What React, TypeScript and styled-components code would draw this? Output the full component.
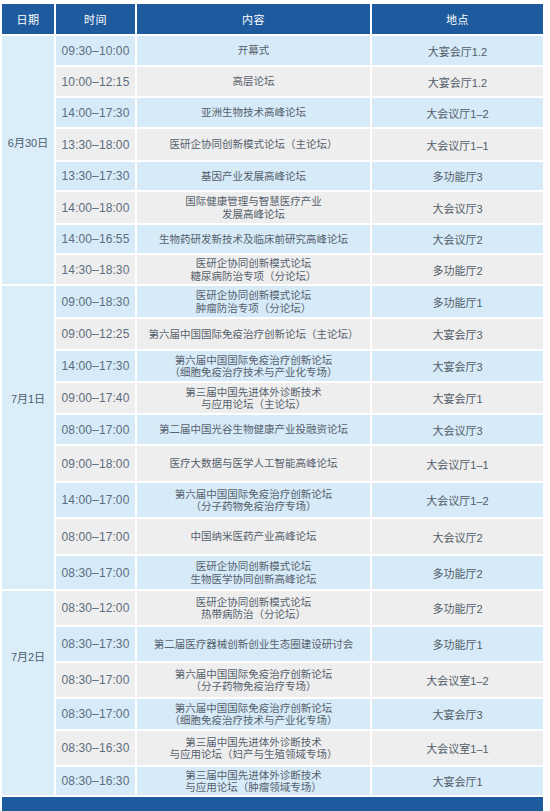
import React from "react";
import styled, { createGlobalStyle } from "styled-components";

const GlobalStyle = createGlobalStyle`
  html, body {
    margin: 0;
    padding: 0;
    background: #ffffff;
    overflow: hidden;
  }
  body {
    font-family: "Liberation Sans", "Noto Sans CJK SC", sans-serif;
  }
`;

const BLUE = "#1d5b9e";
const ROW_BLUE = "#d6eaf8";
const ROW_GRAY = "#eeeeee";
const DATE_BG = "#daedf9";

type Row = { time: string; content: string[]; place: string; h: number };
type Group = { date: string; labelTop: number; rows: Row[] };

const groups: Group[] = [
  {
    date: "6月30日",
    labelTop: 100,
    rows: [
      { time: "09:30–10:00", content: ["开幕式"], place: "大宴会厅1.2", h: 29 },
      { time: "10:00–12:15", content: ["高层论坛"], place: "大宴会厅1.2", h: 29 },
      { time: "14:00–17:30", content: ["亚洲生物技术高峰论坛"], place: "大会议厅1–2", h: 29 },
      { time: "13:30–18:00", content: ["医研企协同创新模式论坛（主论坛）"], place: "大会议厅1–1", h: 31 },
      { time: "13:30–17:30", content: ["基因产业发展高峰论坛"], place: "多功能厅3", h: 28 },
      { time: "14:00–18:00", content: ["国际健康管理与智慧医疗产业", "发展高峰论坛"], place: "大会议厅3", h: 31 },
      { time: "14:00–16:55", content: ["生物药研发新技术及临床前研究高峰论坛"], place: "大会议厅2", h: 28 },
      { time: "14:30–18:30", content: ["医研企协同创新模式论坛", "糖尿病防治专项（分论坛）"], place: "多功能厅2", h: 29 },
    ],
  },
  {
    date: "7月1日",
    labelTop: 106,
    rows: [
      { time: "09:00–18:30", content: ["医研企协同创新模式论坛", "肿瘤防治专项（分论坛）"], place: "多功能厅1", h: 31 },
      { time: "09:00–12:25", content: ["第六届中国国际免疫治疗创新论坛（主论坛）"], place: "大宴会厅3", h: 30 },
      { time: "14:00–17:30", content: ["第六届中国国际免疫治疗创新论坛", "（细胞免疫治疗技术与产业化专场）"], place: "大宴会厅3", h: 30 },
      { time: "09:00–17:40", content: ["第三届中国先进体外诊断技术", "与应用论坛（主论坛）"], place: "大宴会厅1", h: 30 },
      { time: "08:00–17:00", content: ["第二届中国光谷生物健康产业投融资论坛"], place: "大会议厅3", h: 29 },
      { time: "09:00–18:00", content: ["医疗大数据与医学人工智能高峰论坛"], place: "大会议厅1–1", h: 35 },
      { time: "14:00–17:00", content: ["第六届中国国际免疫治疗创新论坛", "（分子药物免疫治疗专场）"], place: "大会议厅1–2", h: 34 },
      { time: "08:00–17:00", content: ["中国纳米医药产业高峰论坛"], place: "大会议厅2", h: 35 },
      { time: "08:30–17:00", content: ["医研企协同创新模式论坛", "生物医学协同创新高峰论坛"], place: "多功能厅2", h: 33 },
    ],
  },
  {
    date: "7月2日",
    labelTop: 59,
    rows: [
      { time: "08:30–12:00", content: ["医研企协同创新模式论坛", "热带病防治（分论坛）"], place: "多功能厅2", h: 34 },
      { time: "08:30–17:30", content: ["第二届医疗器械创新创业生态圈建设研讨会"], place: "多功能厅1", h: 34 },
      { time: "08:30–17:00", content: ["第六届中国国际免疫治疗创新论坛", "（分子药物免疫治疗专场）"], place: "大会议室1–2", h: 34 },
      { time: "08:30–17:00", content: ["第六届中国国际免疫治疗创新论坛", "（细胞免疫治疗技术与产业化专场）"], place: "大宴会厅3", h: 30 },
      { time: "08:30–16:30", content: ["第三届中国先进体外诊断技术", "与应用论坛（妇产与生殖领域专场）"], place: "大会议室1–1", h: 34 },
      { time: "08:30–16:30", content: ["第三届中国先进体外诊断技术", "与应用论坛（肿瘤领域专场）"], place: "大宴会厅1", h: 28 },
    ],
  },
];

const Page = styled.div`
  padding: 4px 0 0 2px;
  width: 541px;
`;

const Table = styled.div<{ $rows: string }>`
  display: grid;
  grid-template-columns: 52px 79px 233px 171px;
  grid-template-rows: ${(p) => p.$rows};
  gap: 2px;
`;

const HeadCell = styled.div`
  background: ${BLUE};
  color: #ffffff;
  font-size: 11px;
  display: flex;
  align-items: center;
  justify-content: center;
  letter-spacing: 0.5px;
`;

const DateCell = styled.div<{ $span: number; $top: number }>`
  grid-column: 1;
  grid-row: span ${(p) => p.$span};
  background: ${DATE_BG};
  color: #4e5d6c;
  font-size: 11px;
  line-height: 14px;
  display: flex;
  justify-content: center;
  align-items: flex-start;
  padding-top: ${(p) => p.$top}px;
`;

const Cell = styled.div<{ $alt: boolean }>`
  background: ${(p) => (p.$alt ? ROW_GRAY : ROW_BLUE)};
  display: flex;
  flex-direction: column;
  align-items: center;
  justify-content: center;
  text-align: center;
`;

const TimeCell = styled(Cell)`
  color: #5c6d7d;
  font-size: 12px;
  letter-spacing: 0.1px;
`;

const ContentCell = styled(Cell)`
  color: #56616c;
  font-size: 10.5px;
  line-height: 12.5px;
`;

const PlaceCell = styled(Cell)`
  color: #525d68;
  font-size: 11px;
`;

const Footer = styled.div`
  margin-top: 2px;
  height: 20px;
  background: ${BLUE};
`;

export default function App() {
  const heights: number[] = [30];
  groups.forEach((g) => g.rows.forEach((r) => heights.push(r.h)));
  const rowsTemplate = heights.map((h) => `${h}px`).join(" ");
  let idx = 0;
  return (
    <>
      <GlobalStyle />
      <Page>
        <Table $rows={rowsTemplate}>
          <HeadCell>日期</HeadCell>
          <HeadCell>时间</HeadCell>
          <HeadCell>内容</HeadCell>
          <HeadCell>地点</HeadCell>
          {groups.map((g) => (
            <React.Fragment key={g.date}>
              <DateCell $span={g.rows.length} $top={g.labelTop}>
                {g.date}
              </DateCell>
              {g.rows.map((r, i) => {
                const alt = idx % 2 === 1;
                idx += 1;
                return (
                  <React.Fragment key={g.date + i}>
                    <TimeCell $alt={alt}>{r.time}</TimeCell>
                    <ContentCell $alt={alt}>
                      {r.content.map((line) => (
                        <span key={line}>{line}</span>
                      ))}
                    </ContentCell>
                    <PlaceCell $alt={alt}>{r.place}</PlaceCell>
                  </React.Fragment>
                );
              })}
            </React.Fragment>
          ))}
        </Table>
        <Footer />
      </Page>
    </>
  );
}
